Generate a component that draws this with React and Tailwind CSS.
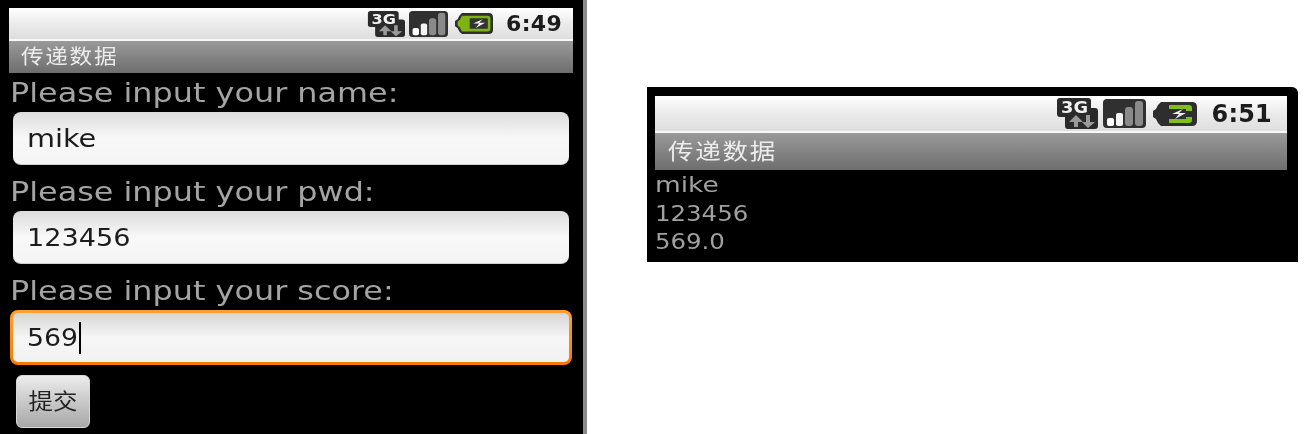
import React from "react";

const FONT = "font-['DejaVu_Sans','Noto_Sans_CJK_SC',sans-serif]";

const NetworkIcon = ({ className }) => (
  <svg viewBox="0 0 42 31" preserveAspectRatio="none" className={className}>
    <path d="M1 3q0-3 3-3h28q3 0 3 3v7h4q3 0 3 3v15q0 3-3 3H12q-3 0-3-3V19H4q-3 0-3-3z" fill="#2a2a2a" />
    <text x="5" y="15" fontFamily="DejaVu Sans" fontWeight="700" fontSize="16" fill="#f2f2f2" textLength="27" lengthAdjust="spacingAndGlyphs">
      3G
    </text>
    <path d="M18 29v-5h-5l7-7 7 7h-5v5z" fill="#9a9a9a" />
    <path d="M30 17v7h-4l6 6 7-6h-5v-7z" fill="#9a9a9a" />
  </svg>
);

const SignalIcon = ({ className }) => (
  <svg viewBox="0 0 43 29" preserveAspectRatio="none" className={className}>
    <rect width="43" height="29" rx="4" fill="#303030" />
    <rect x="4" y="19" width="7" height="8" rx="2" fill="#fff" />
    <rect x="13" y="14" width="7" height="13" rx="2" fill="#f4f4f4" />
    <rect x="22" y="8" width="8" height="19" rx="3" fill="#8a8a8a" />
    <rect x="32" y="2" width="8" height="25" rx="3" fill="#8a8a8a" />
  </svg>
);

const BatteryIcon = ({ className, full }) => (
  <svg viewBox="0 0 44 24" preserveAspectRatio="none" className={className}>
    <path d="M0 9l3-2 2-4 3-3h31q5 0 5 5v14q0 5-5 5H8l-3-3-2-4-3-2z" fill="#2e2e2e" />
    {full ? (
      <>
        <path d="M3 10l3-3 2-4h30q3 0 3 3v12q0 3-3 3H8l-2-4-3-3z" fill="#7db312" />
        <rect x="17" y="6" width="21" height="12" rx="1" fill="#333" />
        <path d="M32 7l-11 5h7l-4 5 11-6h-7l4-4z" fill="#f2f2f2" />
      </>
    ) : (
      <>
        <path d="M16 3h20q3 0 3 3v3h-6V7H16z" fill="#7fc01a" />
        <path d="M16 21h20q3 0 3-3v-3h-6v2H16z" fill="#7fc01a" />
        <path d="M30 7l-11 5h7l-4 5 11-6h-7l4-4z" fill="#f2f2f2" />
      </>
    )}
  </svg>
);

const StatusBar = ({ children }) => (
  <div className="flex items-center justify-end h-full bg-gradient-to-b from-white via-[#ebebeb] to-[#dedede] border-b-2 border-[#f8f8f8]">
    {children}
  </div>
);

const TitleBar = ({ h, className }) => (
  <div className={`flex items-center bg-gradient-to-b from-[#9a9a9a] to-[#6e6e6e] text-[#ececec] ${h}`}>
    <span className={`inline-block origin-left ${className}`}>传递数据</span>
  </div>
);

const Field = ({ label, value, focused, valueClass }) => (
  <div>
    <div className="text-[27px] leading-[38px] text-[#a4a4a4] pl-[1px] whitespace-nowrap">
      <span className="inline-block origin-left scale-x-[1.18]">{label}</span>
    </div>
    {focused ? (
      <div className="h-[55px] ml-[1px] mr-[1px] rounded-[8px] bg-gradient-to-b from-[#ffa030] to-[#f57a00] p-[3px]">
        <div className="h-full rounded-[5px] bg-gradient-to-b from-[#d6d6d6] via-[#f6f6f6] to-[#f2f2f2] flex items-center pl-[14px] text-[25px] text-[#1c1c1c]">
          <span className={`inline-block origin-left ${valueClass}`}>{value}</span>
          <span className="w-[2px] h-[32px] ml-[4px] bg-black" />
        </div>
      </div>
    ) : (
      <div className="h-[53px] ml-[4px] mr-[4px] pt-[2px] rounded-[8px] bg-gradient-to-b from-[#dcdcdc] via-[#f8f8f8] to-[#f4f4f4] border-b border-[#cfcfcf] flex items-center pl-[14px] text-[25px] text-[#1c1c1c]">
        <span className={`inline-block origin-left ${valueClass}`}>{value}</span>
      </div>
    )}
  </div>
);

export default function App() {
  return (
    <div className={`flex items-start w-[1304px] h-[434px] bg-white overflow-hidden blur-[0.5px] ${FONT}`}>
      <div className="w-[587px] h-[434px] shrink-0 bg-black border-r-[4px] border-[#8a8a8a] pl-[9px] pr-[10px] pt-[8px]">
        <div className="h-[33px]">
          <StatusBar>
            <NetworkIcon className="w-[38px] h-[26px]" />
            <SignalIcon className="w-[39px] h-[26px] ml-[4px]" />
            <BatteryIcon full className="w-[38px] h-[21px] ml-[7px]" />
            <span className="ml-[13px] mr-[11px] text-[22px] leading-none font-bold text-[#1c1c1c] tracking-[0.3px]">6:49</span>
          </StatusBar>
        </div>
        <TitleBar h="h-[32px]" className="ml-[12px] text-[20px] tracking-[1.5px] scale-x-[1.13]" />
        <div className="mt-[1px] flex flex-col gap-[8px]">
          <Field label="Please input your name:" value="mike" valueClass="scale-x-[1.15]" />
          <Field label="Please input your pwd:" value="123456" valueClass="scale-x-[1.085]" />
          <Field label="Please input your score:" value="569" valueClass="scale-x-[1.07]" focused />
        </div>
        <button className={`mt-[10px] ml-[7px] w-[74px] h-[53px] rounded-[6px] bg-gradient-to-b from-[#ececec] to-[#a8a8a8] border border-[#d8d8d8] text-[#222] ${FONT}`}>
          <span className="inline-block text-[22px] scale-x-[1.11]">提交</span>
        </button>
      </div>

      <div className="w-[651px] h-[175px] ml-[60px] mt-[87px] shrink-0 bg-black rounded-tr-[6px] pl-[8px] pr-[11px] pt-[9px]">
        <div className="h-[37px]">
          <StatusBar>
            <NetworkIcon className="w-[42px] h-[31px]" />
            <SignalIcon className="w-[43px] h-[29px] ml-[5px]" />
            <BatteryIcon className="w-[44px] h-[24px] ml-[7px]" />
            <span className="ml-[15px] mr-[15px] text-[24px] leading-none font-bold text-[#1c1c1c] tracking-[0.2px]">6:51</span>
          </StatusBar>
        </div>
        <TitleBar h="h-[37px]" className="ml-[13px] text-[22px] tracking-[1.5px] scale-x-[1.16]" />
        <div className="text-[22px] leading-[28.5px] text-[#a0a0a0] pt-[1px]">
          <div className="origin-left scale-x-[1.2]">mike</div>
          <div className="origin-left scale-x-[1.11]">123456</div>
          <div className="origin-left scale-x-[1.11]">569.0</div>
        </div>
      </div>
    </div>
  );
}
